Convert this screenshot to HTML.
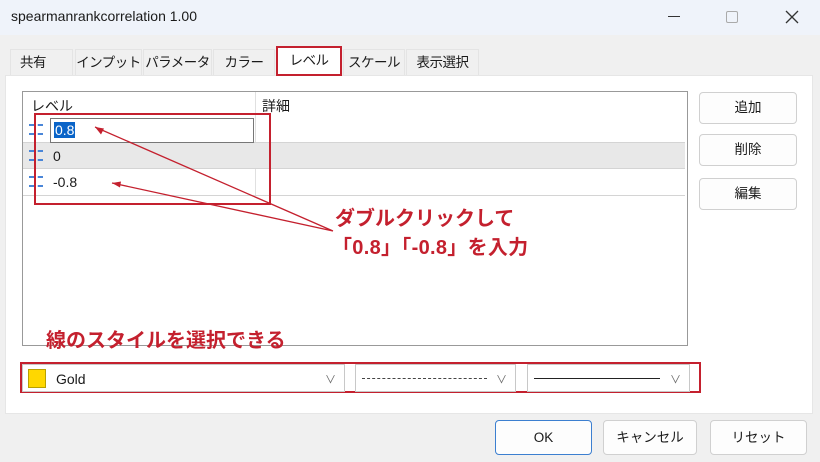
<!DOCTYPE html>
<html><head><meta charset="utf-8"><style>
*{box-sizing:border-box;margin:0;padding:0}
body{width:820px;height:462px;overflow:hidden;background:#f0f0f0;font-family:"Liberation Sans","Noto Sans CJK JP",sans-serif;font-size:13px;color:#1a1a1a;position:relative}
.a{position:absolute}
.tab{position:absolute;top:49px;height:26px;background:#f0f0f0;border:1px solid #e4e4e4;border-bottom:none;text-align:center;line-height:25px;font-size:13.5px;white-space:nowrap;letter-spacing:-0.5px;overflow:hidden}
.btn{position:absolute;background:#fdfdfd;border:1px solid #d0d0d0;border-radius:4px;text-align:center;font-size:13.5px}
.red{color:#c4202e;font-weight:bold;font-size:20px;position:absolute;white-space:nowrap}
.combo{position:absolute;top:364px;height:28px;background:#fff;border:1px solid #c8c8c8}
.chev{position:absolute;right:8px;top:6px;color:#666;font-size:11px}
.ic{position:absolute;left:29px;width:14px;height:11px;border-top:2px dashed #4a86d8;border-bottom:2px dashed #4a86d8}
</style></head><body>
<div class="a" style="left:0;top:0;width:820px;height:35px;background:#eff3fa"></div>
<div class="a" style="left:11px;top:8px;font-size:14px">spearmanrankcorrelation 1.00</div>
<div class="a" style="left:668px;top:16px;width:12px;height:1px;background:#333"></div>
<div class="a" style="left:726px;top:11px;width:12px;height:12px;border:1px solid #aaa;border-radius:2px"></div>
<svg class="a" style="left:785px;top:10px" width="14" height="14"><path d="M1 1L13 13M13 1L1 13" stroke="#333" stroke-width="1.3"/></svg>
<div class="a" style="left:5px;top:75px;width:808px;height:339px;background:#fff;border:1px solid #e6e6e6"></div>
<div class="tab" style="left:10px;width:63px;text-align:left;padding-left:9px">共有</div>
<div class="tab" style="left:75px;width:67px">インプット</div>
<div class="tab" style="left:143px;width:69px">パラメータ</div>
<div class="tab" style="left:213px;width:62px">カラー</div>
<div class="tab" style="left:276px;top:46px;height:30px;width:66px;background:#fff;border:2px solid #c4202e;line-height:26px">レベル</div>
<div class="tab" style="left:343px;width:62px">スケール</div>
<div class="tab" style="left:406px;width:73px">表示選択</div>
<div class="a" style="left:22px;top:91px;width:666px;height:255px;background:#fff;border:1px solid #999"></div>
<div class="a" style="left:255px;top:92px;width:1px;height:103px;background:#e0e0e0"></div>
<div class="a" style="left:31px;top:96px;font-size:14px">レベル</div>
<div class="a" style="left:262px;top:96px;font-size:14px">詳細</div>
<div class="a" style="left:23px;top:142px;width:662px;height:27px;background:#e8e8e8;border-top:1px solid #d4d4d4;border-bottom:1px solid #d4d4d4"></div>
<div class="a" style="left:23px;top:195px;width:662px;height:1px;background:#d4d4d4"></div>
<div class="ic" style="top:124px"></div><div class="ic" style="top:150px"></div><div class="ic" style="top:176px"></div>
<div class="a" style="left:50px;top:118px;width:204px;height:25px;border:1px solid #777;background:#fff"></div>
<div class="a" style="left:54px;top:122px;background:#0a64c8;color:#fff;font-size:14px;line-height:16px;padding:0 1px">0.8</div>
<div class="a" style="left:53px;top:148px;font-size:14px">0</div>
<div class="a" style="left:53px;top:174px;font-size:14px">-0.8</div>
<div class="a" style="left:34px;top:113px;width:237px;height:92px;border:2px solid #c4202e"></div>
<svg class="a" style="left:0;top:0" width="820" height="462">
<path d="M333 231L95 127M333 231L112 183" stroke="#c4202e" stroke-width="1.3" fill="none"/>
<path d="M95 127l9 1.5-3 6z M112 183l9 -1.5-1 6z" fill="#c4202e"/>
</svg>
<div class="red" style="left:335px;top:202px">ダブルクリックして</div>
<div class="red" style="left:332px;top:231px;letter-spacing:0.3px">「0.8」「-0.8」を入力</div>
<div class="red" style="left:46px;top:324px">線のスタイルを選択できる</div>
<div class="btn" style="left:699px;top:92px;width:98px;height:32px;line-height:30px">追加</div>
<div class="btn" style="left:699px;top:134px;width:98px;height:32px;line-height:30px">削除</div>
<div class="btn" style="left:699px;top:178px;width:98px;height:32px;line-height:30px">編集</div>
<div class="a" style="left:20px;top:362px;width:681px;height:31px;border:2px solid #c4202e"></div>
<div class="combo" style="left:22px;width:323px"><div class="a" style="left:5px;top:4px;width:18px;height:19px;background:#ffd700;border:1px solid #b8a000"></div><div class="a" style="left:33px;top:6px;font-size:14px">Gold</div><div class="chev">∨</div></div>
<div class="combo" style="left:355px;width:161px"><div class="a" style="left:6px;top:13px;width:125px;border-top:1px dashed #444"></div><div class="chev">∨</div></div>
<div class="combo" style="left:527px;width:163px"><div class="a" style="left:6px;top:13px;width:126px;height:1px;background:#222"></div><div class="chev">∨</div></div>
<div class="btn" style="left:495px;top:420px;width:97px;height:35px;line-height:33px;border:1px solid #3c7fd0">OK</div>
<div class="btn" style="left:603px;top:420px;width:94px;height:35px;line-height:33px">キャンセル</div>
<div class="btn" style="left:710px;top:420px;width:97px;height:35px;line-height:33px">リセット</div>
</body></html>
